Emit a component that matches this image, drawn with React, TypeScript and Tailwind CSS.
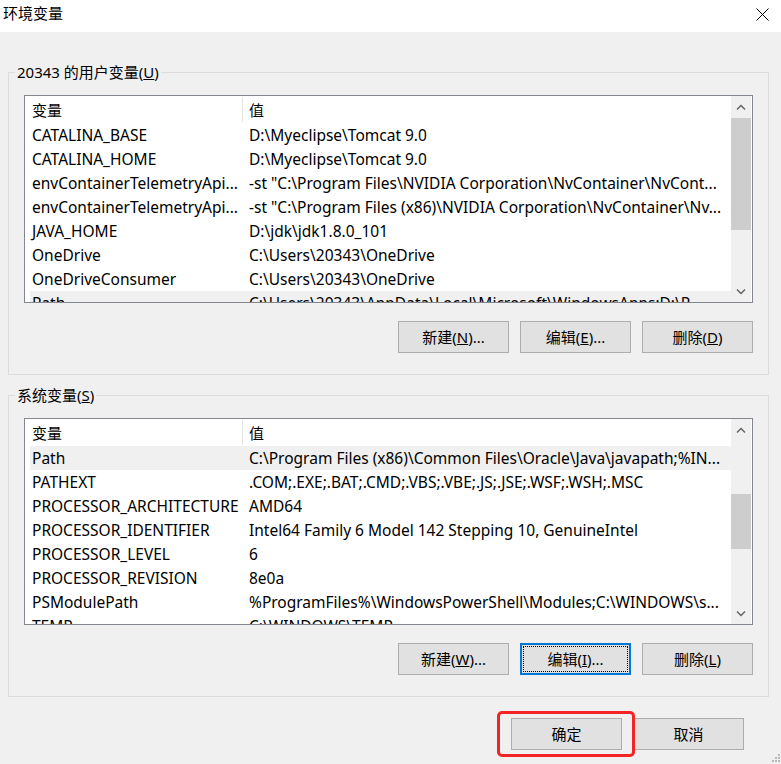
import React from 'react';

type Row = { name: string; value: string };

const userRows: Row[] = [
  { name: 'CATALINA_BASE', value: 'D:\\Myeclipse\\Tomcat 9.0' },
  { name: 'CATALINA_HOME', value: 'D:\\Myeclipse\\Tomcat 9.0' },
  { name: 'envContainerTelemetryApi...', value: '-st "C:\\Program Files\\NVIDIA Corporation\\NvContainer\\NvCont...' },
  { name: 'envContainerTelemetryApi...', value: '-st "C:\\Program Files (x86)\\NVIDIA Corporation\\NvContainer\\Nv...' },
  { name: 'JAVA_HOME', value: 'D:\\jdk\\jdk1.8.0_101' },
  { name: 'OneDrive', value: 'C:\\Users\\20343\\OneDrive' },
  { name: 'OneDriveConsumer', value: 'C:\\Users\\20343\\OneDrive' },
  { name: 'Path', value: 'C:\\Users\\20343\\AppData\\Local\\Microsoft\\WindowsApps;D:\\P...' },
];

const sysRows: Row[] = [
  { name: 'Path', value: 'C:\\Program Files (x86)\\Common Files\\Oracle\\Java\\javapath;%IN...' },
  { name: 'PATHEXT', value: '.COM;.EXE;.BAT;.CMD;.VBS;.VBE;.JS;.JSE;.WSF;.WSH;.MSC' },
  { name: 'PROCESSOR_ARCHITECTURE', value: 'AMD64' },
  { name: 'PROCESSOR_IDENTIFIER', value: 'Intel64 Family 6 Model 142 Stepping 10, GenuineIntel' },
  { name: 'PROCESSOR_LEVEL', value: '6' },
  { name: 'PROCESSOR_REVISION', value: '8e0a' },
  { name: 'PSModulePath', value: '%ProgramFiles%\\WindowsPowerShell\\Modules;C:\\WINDOWS\\s...' },
  { name: 'TEMP', value: 'C:\\WINDOWS\\TEMP' },
];

function Chevron({ up }: { up?: boolean }) {
  return (
    <svg width="10" height="6" viewBox="0 0 10 6">
      <polyline
        points={up ? '1,5.5 5,1.5 9,5.5' : '1,0.5 5,4.5 9,0.5'}
        fill="none"
        stroke="#606060"
        strokeWidth="1.4"
      />
    </svg>
  );
}

function VarList({ rows, height, thumbTop, thumbHeight, selected }: {
  rows: Row[];
  height: string;
  thumbTop: string;
  thumbHeight: string;
  selected: number;
}) {
  return (
    <div className={`flex border border-[#828790] bg-white ${height}`}>
      {/* list body */}
      <div className="flex-1 overflow-hidden pl-[5px]">
        <div className="flex h-[27px] items-center">
          <div className="w-[212px] pl-[2px]">变量</div>
          <div className="h-[25px] w-px bg-[#e5e5e5]" />
          <div className="pl-[6px]">值</div>
        </div>
        {rows.map((r, i) => (
          <div
            key={i}
            className={`flex h-[24px] shrink-0 items-center whitespace-nowrap text-[15.5px] ${i === selected ? 'bg-[#f0f0f0]' : ''}`}
          >
            <div className="w-[212px] overflow-hidden pl-[2px]">{r.name}</div>
            <div className="overflow-hidden pl-[7px]">{r.value}</div>
          </div>
        ))}
      </div>
      {/* scrollbar */}
      <div className="mr-[1px] flex w-[20px] flex-col bg-[#f0f0f0]">
        <div className="flex h-[21px] items-center justify-center">
          <Chevron up />
        </div>
        <div className="flex-1">
          <div className={`bg-[#cdcdcd] ${thumbTop} ${thumbHeight}`} />
        </div>
        <div className="flex h-[21px] items-center justify-center">
          <Chevron />
        </div>
      </div>
    </div>
  );
}

function Btn({ children, focused }: { children: React.ReactNode; focused?: boolean }) {
  return (
    <button
      className={`flex h-[32px] w-[111px] items-center justify-center bg-[#e1e1e1] leading-[20px] ${
        focused
          ? 'border-2 border-[#0078d7] outline-1 outline-dotted outline-black outline-offset-[-4px]'
          : 'border border-[#adadad]'
      }`}
    >
      {children}
    </button>
  );
}

export default function App() {
  return (
    <div className="relative h-[764px] w-[781px] overflow-hidden bg-[#f0f0f0] font-['Noto_Sans','Noto_Sans_CJK_SC',sans-serif] text-[15px] leading-[20px] text-black">
      {/* Title bar */}
      <div className="flex h-[32px] items-start justify-between bg-white">
        <div className="pl-[3px] pt-[3px]">环境变量</div>
        <svg className="mr-[12px] mt-[8px]" width="13" height="13" viewBox="0 0 13 13">
          <path d="M0.5 0.5 L12.5 12.5 M12.5 0.5 L0.5 12.5" stroke="#000" strokeWidth="1" />
        </svg>
      </div>

      <div className="px-[8px]">
        {/* User variables */}
        <fieldset className="mt-[30px] w-[761px] border border-[#dcdcdc] px-[15px] pb-[21px]">
          <legend className="-ml-[9px] px-[2px] leading-[20px]">
            20343 的用户变量(<u>U</u>)
          </legend>
          <div className="mt-[13px]">
            <VarList rows={userRows} height="h-[208px]" thumbTop="mt-[1px]" thumbHeight="h-[112px]" selected={7} />
          </div>
          <div className="mt-[18px] flex justify-end gap-[11px]">
            <Btn>新建(<u>N</u>)...</Btn>
            <Btn>编辑(<u>E</u>)...</Btn>
            <Btn>删除(<u>D</u>)</Btn>
          </div>
        </fieldset>

        {/* System variables */}
        <fieldset className="mt-[10px] w-[761px] border border-[#dcdcdc] px-[15px] pb-[21px]">
          <legend className="-ml-[9px] px-[2px] leading-[20px]">
            系统变量(<u>S</u>)
          </legend>
          <div className="mt-[13px]">
            <VarList rows={sysRows} height="h-[207px]" thumbTop="mt-[54px]" thumbHeight="h-[55px]" selected={0} />
          </div>
          <div className="mt-[18px] flex justify-end gap-[11px]">
            <Btn>新建(<u>W</u>)...</Btn>
            <Btn focused>编辑(<u>I</u>)...</Btn>
            <Btn>删除(<u>L</u>)</Btn>
          </div>
        </fieldset>

        {/* Dialog buttons */}
        <div className="mr-[29px] mt-[21px] flex justify-end gap-[11px]">
          <Btn>确定</Btn>
          <Btn>取消</Btn>
        </div>
      </div>

      {/* red annotation box */}
      <div className="absolute left-[497px] top-[711px] h-[46px] w-[138px] rounded-[5px] border-[3px] border-[#f52424]" />

      {/* resize grip */}
      <svg className="absolute bottom-0 right-0" width="10" height="11" viewBox="0 0 10 11">
        {[
          [7, 1],
          [4, 4],
          [7, 4],
          [1, 7],
          [4, 7],
          [7, 7],
        ].map(([x, y], i) => (
          <rect key={i} x={x} y={y} width="2" height="2" fill="#b9b9b9" />
        ))}
      </svg>
    </div>
  );
}
